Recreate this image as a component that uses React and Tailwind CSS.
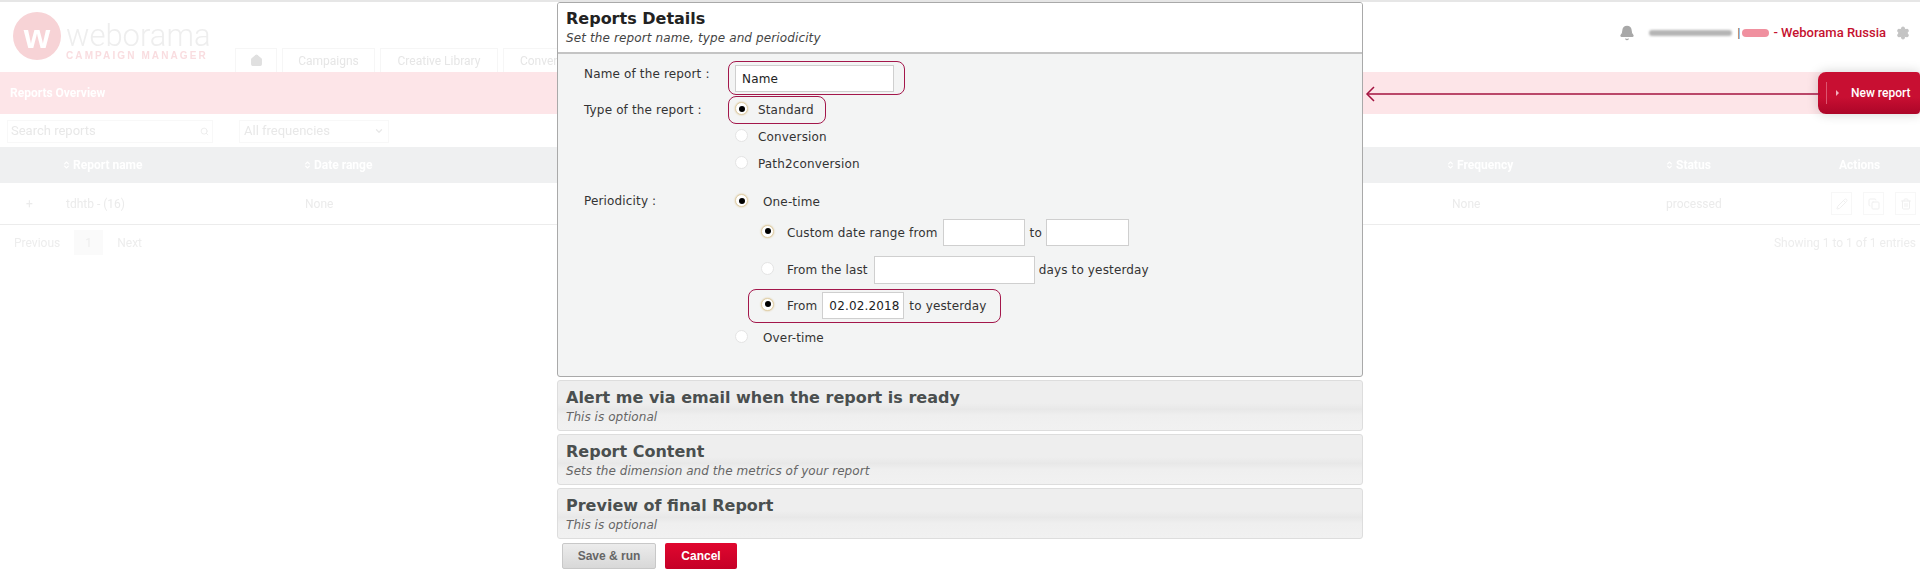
import { Bell, Settings, Home, Pencil, Copy, Trash2, ChevronDown, ChevronsUpDown, Search } from 'lucide-react';

const verdana = 'font-["DejaVu_Sans",sans-serif]';

const tabs = [
  { label: 'Campaigns', width: 'w-[93px]' },
  { label: 'Creative Library', width: 'w-[118px]' },
  { label: 'Conversions', width: 'w-[100px]' },
];

const accordions = [
  { title: 'Alert me via email when the report is ready', note: 'This is optional' },
  { title: 'Report Content', note: 'Sets the dimension and the metrics of your report' },
  { title: 'Preview of final Report', note: 'This is optional' },
];

function Radio({ checked }) {
  return (
    <span
      className={`mt-[-3px] inline-flex h-[13px] w-[13px] shrink-0 items-center justify-center rounded-full border bg-white ${
        checked ? 'border-[#e0cfa8] shadow-[0_0_2px_#d8c090]' : 'border-[#e4e4e4]'
      }`}
    >
      {checked && <span className="h-[6px] w-[6px] rounded-full bg-black" />}
    </span>
  );
}

function TextBox({ className, value }) {
  return (
    <span
      className={`flex shrink-0 items-center border border-[#cfcfcf] bg-white pl-[6px] text-[12px] text-[#222] ${className}`}
    >
      {value}
    </span>
  );
}

function Callout({ className }) {
  return <span className={`absolute rounded-[8px] border border-[#a3174b] ${className}`} />;
}

function SortHead({ label, className }) {
  return (
    <div className={`flex items-center gap-[2px] ${className}`}>
      <ChevronsUpDown className="h-[12px] w-[9px] text-white" strokeWidth={3} />
      <span className="text-[12px] font-bold text-white">{label}</span>
    </div>
  );
}

function BackgroundPage() {
  return (
    <div className="font-['Roboto',sans-serif]">
      <div className="h-[2px] bg-[#e6e6e6]" />
      <header className="flex h-[70px] items-start justify-between">
        <div className="flex h-full items-start pl-[13px] blur-[0.4px]">
          <div className="mt-[10px] flex h-[48px] w-[48px] items-center justify-center rounded-full bg-[#f7d3d6]">
            <span className="font-['Liberation_Sans',sans-serif] text-[34px] leading-none font-bold text-white">w</span>
          </div>
          <div className="mt-[20px] ml-[5px] flex w-[150px] flex-col">
            <span className="text-[31px] leading-[28px] font-light text-[#eeeeee]">weborama</span>
            <span className="font-['Liberation_Sans',sans-serif] text-[10px] leading-[12px] font-bold tracking-[2.1px] whitespace-nowrap text-[#f9dde0]">
              CAMPAIGN MANAGER
            </span>
          </div>
          <nav className="mt-[46px] ml-[19px] flex h-[24px] items-stretch gap-[5px]">
            <div className="flex w-[42px] items-center justify-center border border-b-0 border-[#f6f6f6]">
              <Home className="h-[13px] w-[13px] text-[#e0e0e0]" fill="#e0e0e0" />
            </div>
            {tabs.map((tab) => (
              <div
                key={tab.label}
                className={`flex items-center justify-center border border-b-0 border-[#f6f6f6] text-[12px] text-[#e6e6e6] ${tab.width}`}
              >
                {tab.label}
              </div>
            ))}
          </nav>
        </div>
        <div className="mt-[21px] flex items-center pr-[10px] text-[13px] leading-[20px]">
          <Bell className="h-[16px] w-[16px] text-[#a8a8a8]" fill="#a8a8a8" />
          <span className="ml-[14px] h-[6px] w-[83px] rounded-full bg-[#b5b5b5] blur-[1px]" />
          <span className="ml-[5px] text-[#555]">|</span>
          <span className="ml-[2px] h-[8px] w-[27px] rounded-full bg-[#f0909f] blur-[0.6px]" />
          <span className="ml-[4px] font-medium text-[#c5112f]">- Weborama Russia</span>
          <Settings className="ml-[10px] h-[14px] w-[14px] text-[#c4c4c4]" fill="#c4c4c4" strokeWidth={2} />
        </div>
      </header>

      <div className="flex h-[42px] items-center justify-between bg-[#fde5e8]">
        <span className="pl-[10px] text-[12px] font-bold text-white blur-[0.4px]">Reports Overview</span>
        <button className="flex h-[42px] w-[102px] items-center rounded-l-[8px] rounded-r-[4px] bg-[linear-gradient(#c80f32,#c80f32_60%,#ac0528)] text-[12px] font-medium text-white shadow-[0_0_12px_rgba(0,0,0,0.18)]">
          <span className="ml-[8px] h-[22px] w-px bg-[#dd5570]" />
          <span className="ml-[9px] h-0 w-0 border-y-[3px] border-l-[3px] border-y-transparent border-l-[#f0b0bc]" />
          <span className="ml-[12px]">New report</span>
        </button>
      </div>

      <div className="flex h-[33px] items-center pt-[1px] pl-[7px] blur-[0.4px]">
        <div className="flex h-[23px] w-[206px] items-center justify-between border border-[#f8f8f8] px-[3px] text-[13px] text-[#e8e8e8]">
          Search reports
          <Search className="h-[9px] w-[9px]" />
        </div>
        <div className="ml-[26px] flex h-[23px] w-[150px] items-center justify-between border border-[#f8f8f8] px-[4px] text-[13px] text-[#e8e8e8]">
          All frequencies
          <ChevronDown className="h-[10px] w-[10px]" strokeWidth={3} />
        </div>
      </div>

      <div className="flex h-[36px] items-center bg-[#eff0f1] blur-[0.4px]">
        <SortHead label="Report name" className="ml-[62px] w-[241px]" />
        <SortHead label="Date range" className="w-[1143px]" />
        <SortHead label="Frequency" className="w-[219px]" />
        <SortHead label="Status" className="w-[174px]" />
        <span className="text-[12px] font-bold text-white">Actions</span>
      </div>

      <div className="flex h-[42px] items-center border-b border-[#ececec] text-[12px] text-[#ebebeb] blur-[0.4px]">
        <span className="ml-[26px] w-[40px]">+</span>
        <span className="w-[239px]">tdhtb - (16)</span>
        <span className="w-[1147px]">None</span>
        <span className="w-[214px]">None</span>
        <span className="w-[165px]">processed</span>
        <div className="flex gap-[11px] text-[#efefef]">
          <span className="flex h-[23px] w-[21px] items-center justify-center border border-[#f7f7f7]">
            <Pencil className="h-[12px] w-[12px]" />
          </span>
          <span className="flex h-[23px] w-[21px] items-center justify-center border border-[#f7f7f7]">
            <Copy className="h-[12px] w-[12px]" />
          </span>
          <span className="flex h-[23px] w-[21px] items-center justify-center border border-[#f7f7f7]">
            <Trash2 className="h-[12px] w-[12px]" />
          </span>
        </div>
      </div>

      <div className="mt-[5px] flex h-[25px] items-center justify-between pr-[4px] pl-[14px] text-[12px] text-[#ededed] blur-[0.4px]">
        <div className="flex items-center">
          <span>Previous</span>
          <span className="ml-[14px] flex h-[25px] w-[29px] items-center justify-center bg-[#fafafa]">1</span>
          <span className="ml-[14px]">Next</span>
        </div>
        <span>Showing 1 to 1 of 1 entries</span>
      </div>
    </div>
  );
}

function ReportModal() {
  return (
    <div className={`absolute top-[2px] left-[557px] w-[806px] ${verdana}`}>
      <section className="overflow-hidden rounded-[3px] border border-[#a9a9a9] bg-[#f3f4f4]">
        <div className="h-[51px] border-b-2 border-[#c4c4c4] bg-white pt-[5px] pl-[8px]">
          <h2 className="text-[16px] leading-[22px] font-bold text-[#222]">Reports Details</h2>
          <p className="text-[12px] leading-[16px] tracking-[0.12px] text-[#444] italic">
            Set the report name, type and periodicity
          </p>
        </div>

        <div className="h-[322px] text-[12px] tracking-[0.15px] text-[#333]">
          <div className="flex pt-[11px]">
            <label className="mt-[1px] w-[177px] pl-[26px] leading-[16px]">Name of the report :</label>
            <span className="relative">
              <TextBox className="h-[27px] w-[159px]" value="Name" />
              <Callout className="-top-[4px] -right-[11px] -bottom-[3px] -left-[7px]" />
            </span>
          </div>

          <div className="mt-[5px] flex">
            <label className="mt-[5px] w-[177px] pl-[26px] leading-[16px]">Type of the report :</label>
            <div>
              <div className="relative flex h-[26px] w-fit items-center">
                <Radio checked />
                <span className="ml-[10px]">Standard</span>
                <Callout className="-top-px -right-[12px] -bottom-px -left-[7px]" />
              </div>
              <div className="mt-px flex h-[26px] items-center">
                <Radio />
                <span className="ml-[10px]">Conversion</span>
              </div>
              <div className="mt-px flex h-[26px] items-center">
                <Radio />
                <span className="ml-[10px]">Path2conversion</span>
              </div>
            </div>
          </div>

          <div className="mt-[12px] flex">
            <label className="mt-[4px] w-[177px] pl-[26px] leading-[16px]">Periodicity :</label>
            <div>
              <div className="flex h-[26px] items-center">
                <Radio checked />
                <span className="ml-[15px]">One-time</span>
              </div>
              <div className="mt-[4px] ml-[26px] flex h-[27px] items-center">
                <Radio checked />
                <span className="ml-[13px]">Custom date range from</span>
                <TextBox className="ml-[5px] h-[27px] w-[82px]" />
                <span className="ml-[5px]">to</span>
                <TextBox className="ml-[4px] h-[27px] w-[83px]" />
              </div>
              <div className="mt-[10px] ml-[26px] flex h-[28px] items-center">
                <Radio />
                <span className="ml-[13px]">From the last</span>
                <TextBox className="ml-[6px] h-[28px] w-[161px]" />
                <span className="ml-[4px]">days to yesterday</span>
              </div>
              <div className="relative mt-[8px] ml-[26px] flex h-[27px] w-fit items-center">
                <Radio checked />
                <span className="ml-[13px]">From</span>
                <TextBox className="ml-[5px] h-[27px] w-[82px]" value="02.02.2018" />
                <span className="ml-[5px]">to yesterday</span>
                <Callout className="-top-[3px] -right-[14px] -bottom-[4px] -left-[13px]" />
              </div>
              <div className="mt-[6px] flex h-[26px] items-center">
                <Radio />
                <span className="ml-[15px]">Over-time</span>
              </div>
            </div>
          </div>
        </div>
      </section>

      {accordions.map((item) => (
        <div
          key={item.title}
          className="mt-[3px] h-[51px] rounded-[3px] border border-[#dddddd] bg-[linear-gradient(#eeeeee,#eeeeee_45%,#e8e8e8_58%,#efefef_70%,#f1f1f1)] pt-[5px] pl-[8px]"
        >
          <h3 className="text-[16px] leading-[23px] font-bold text-[#4a4f4f]">{item.title}</h3>
          <p className="text-[12px] leading-[16px] tracking-[0.05px] text-[#666] italic">{item.note}</p>
        </div>
      ))}

      <div className="mt-[4px] flex gap-[9px] pl-[5px]">
        <button className="h-[26px] w-[94px] rounded-[2px] border border-[#c8c8c8] bg-[linear-gradient(#ececec,#d8d8d8)] font-['Liberation_Sans',sans-serif] text-[12px] font-bold text-[#666]">
          Save &amp; run
        </button>
        <button className="h-[26px] w-[72px] rounded-[2px] bg-[linear-gradient(#e0072f,#c50027)] font-['Liberation_Sans',sans-serif] text-[12px] font-bold text-white">
          Cancel
        </button>
      </div>
    </div>
  );
}

export default function App() {
  return (
    <div className="relative h-[581px] w-[1920px] overflow-hidden bg-white">
      <BackgroundPage />
      <ReportModal />
      {/* annotation arrow pointing from the button to the modal */}
      <svg className="absolute top-[86px] left-[1364px] h-[16px] w-[456px]" viewBox="0 0 456 16" fill="none">
        <path d="M3 8H456" stroke="#a3123f" strokeWidth="1.5" />
        <path d="M10 1L3 8L10 15" stroke="#a3123f" strokeWidth="1.5" />
      </svg>
    </div>
  );
}
